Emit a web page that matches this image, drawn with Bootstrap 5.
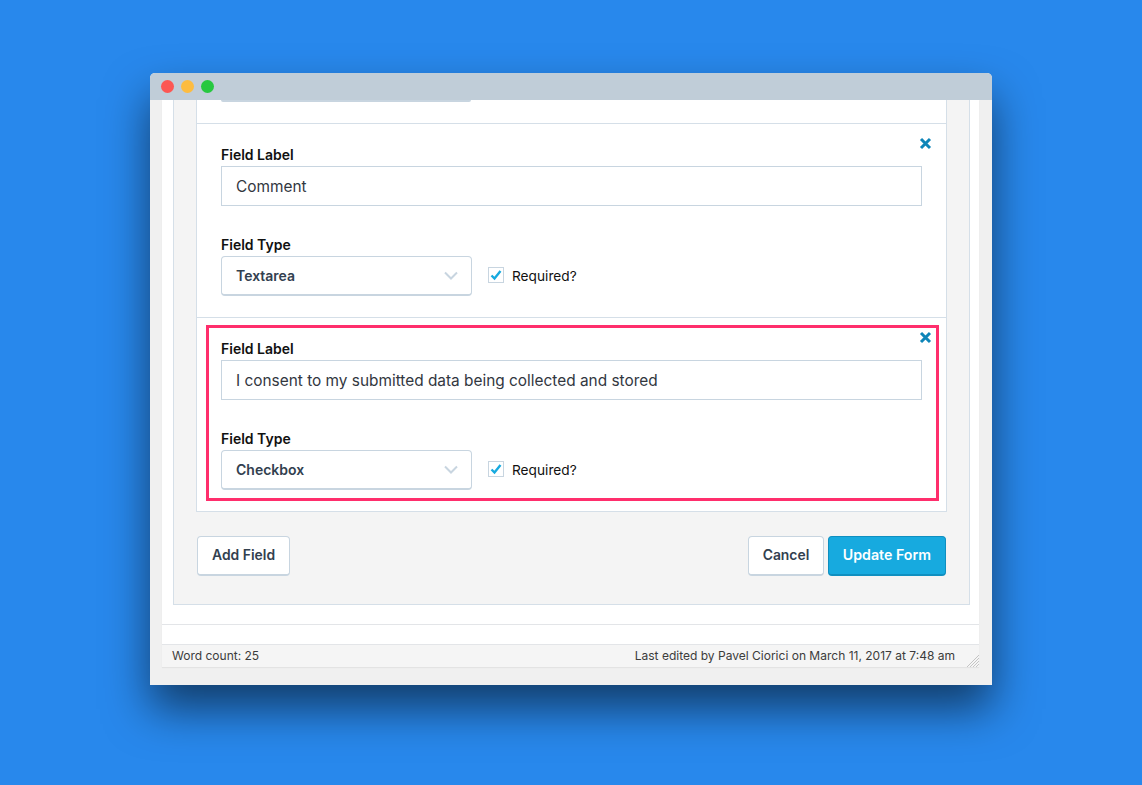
<!DOCTYPE html>
<html lang="en">
<head>
<meta charset="utf-8">
<title>Form fields</title>
<link href="https://cdn.jsdelivr.net/npm/bootstrap@5.3.0/dist/css/bootstrap.min.css" rel="stylesheet">
<style>
html,body{height:100%}
body{background:#2888ec;font-family:Inter,"Liberation Sans",sans-serif;margin:0;padding:73px 150px 100px;overflow:hidden}
.win{width:842px;height:612px;background:#f0f0f0;border-radius:5px 5px 0 0;box-shadow:0 24px 45px rgba(0,0,0,.55);overflow:hidden}
.tbar{height:27px;background:#c0cdd8;padding-left:11px;gap:7px}
.dot{width:13px;height:13px;border-radius:50%}
.d1{background:#fc5753}.d2{background:#fdbc40}.d3{background:#27c840}
.editor{margin:0 13px 0 12px;height:567px;background:#fff;box-shadow:0 1px 1px rgba(0,0,0,.05)}
.metabox{margin:0 9px 0 11px;height:505px;background:#f4f4f4;border:1px solid #d5dfe8;border-top:0;padding:0 22px 0 22px}
.fieldlist{width:751px;background:#fff;border:1px solid #d5dfe8;border-top:0}
.cutoff{height:2px;width:250px;margin-left:24px;background:#c8d5e0;border-radius:0 0 3px 3px}
.frow{position:relative;height:193px;padding:23px 24px 0}
.frow.first{height:195px;margin-top:21px;border-top:1px solid #d5dfe8;border-bottom:1px solid #d5dfe8}
.flabel{display:block;font-size:14px;line-height:16px;font-weight:600;color:#111;margin:0 0 3px}
.finput{height:40px;width:701px;border:1px solid #c8d5e0;padding:0 14px;font-size:15.4px;line-height:40px;color:#32373f;margin-bottom:31px;background:#fff}
.fselect{width:251px;height:40px;border:1px solid #c8d5e0;border-bottom-width:2px;border-radius:4px;padding:0 13px 0 14px;font-size:14px;font-weight:600;color:#32404f;background:#fff}
.fcheck{width:16px;height:16px;border:1px solid #c8d5e0;background:#fff}
.freq{font-size:13.7px;color:#111;margin-left:8px;position:relative;top:1px}
.chk{margin-left:16px;padding-bottom:1px}
.xbtn{position:absolute;right:14px;top:13px;width:13px;height:13px}
.hilite{position:absolute;left:9px;right:7px;top:7px;bottom:10px;border:3px solid #ff2e6c;pointer-events:none}
.actions{width:749px;margin:24px 0 0 1px}
.ubtn{height:40px;border:1px solid #c8d5e0;border-bottom-width:2px;border-radius:4px;background:#fff;color:#32404f;font-size:13.9px;font-weight:600;padding:0 14px 2px;line-height:34px}
.ubtn:hover{background:#fff;color:#32404f;border-color:#c8d5e0}
.ubtn.cxl{padding:0 13.5px 2px}
.ubtn.prime,.ubtn.prime:hover{background:#17aadf;border-color:#0f8fc0;color:#fff;font-size:14.2px}
.gap20{height:20px;border-bottom:1px solid #e3e5e8}
.status{height:23px;margin-top:19px;background:#f5f5f5;border-top:1px solid #e3e5e8;padding:0 24px 0 10px;font-size:12.03px;line-height:22px;color:#3c3c3c;position:relative}
.grip{position:absolute;right:0;bottom:0;width:12px;height:12px}
</style>
</head>
<body>
<div class="win">
  <div class="tbar d-flex align-items-center">
    <span class="dot d1"></span><span class="dot d2"></span><span class="dot d3"></span>
  </div>
  <div class="editor">
    <div class="metabox">
      <div class="fieldlist">
        <div class="cutoff"></div>
        <div class="frow first">
          <svg class="xbtn" viewBox="0 0 13 13"><path d="M2 2l9 9M11 2l-9 9" stroke="#0e85b8" stroke-width="3" fill="none"/></svg>
          <label class="flabel">Field Label</label>
          <div class="finput">Comment</div>
          <label class="flabel">Field Type</label>
          <div class="d-flex align-items-center">
            <div class="fselect d-flex align-items-center justify-content-between"><span>Textarea</span>
              <svg width="14" height="9" viewBox="0 0 14 9"><path d="M1 1.5l6 6 6-6" stroke="#c8d5e0" stroke-width="2" fill="none"/></svg></div>
            <div class="chk d-flex align-items-center">
              <span class="fcheck d-flex align-items-center justify-content-center"><svg width="12" height="11" viewBox="0 0 12 11"><path d="M1.5 5.5l3 3 6-7.5" stroke="#17aadf" stroke-width="2.4" fill="none"/></svg></span>
              <span class="freq">Required?</span>
            </div>
          </div>
        </div>
        <div class="frow last">
          <span class="hilite"></span>
          <svg class="xbtn" viewBox="0 0 13 13"><path d="M2 2l9 9M11 2l-9 9" stroke="#0e85b8" stroke-width="3" fill="none"/></svg>
          <label class="flabel">Field Label</label>
          <div class="finput">I consent to my submitted data being collected and stored</div>
          <label class="flabel">Field Type</label>
          <div class="d-flex align-items-center">
            <div class="fselect d-flex align-items-center justify-content-between"><span>Checkbox</span>
              <svg width="14" height="9" viewBox="0 0 14 9"><path d="M1 1.5l6 6 6-6" stroke="#c8d5e0" stroke-width="2" fill="none"/></svg></div>
            <div class="chk d-flex align-items-center">
              <span class="fcheck d-flex align-items-center justify-content-center"><svg width="12" height="11" viewBox="0 0 12 11"><path d="M1.5 5.5l3 3 6-7.5" stroke="#17aadf" stroke-width="2.4" fill="none"/></svg></span>
              <span class="freq">Required?</span>
            </div>
          </div>
        </div>
      </div>
      <div class="actions d-flex justify-content-between">
        <button class="btn ubtn" type="button">Add Field</button>
        <div class="d-flex gap-1">
          <button class="btn ubtn cxl" type="button">Cancel</button>
          <button class="btn ubtn prime" type="button">Update Form</button>
        </div>
      </div>
    </div>
    <div class="gap20"></div>
    <div class="status d-flex justify-content-between">
      <span>Word count: 25</span>
      <span>Last edited by Pavel Ciorici on March 11, 2017 at 7:48 am</span>
      <svg class="grip" viewBox="0 0 12 12"><path d="M12 0L0 12M12 3L3 12M12 6l-6 6M12 9l-3 3" stroke="#c4c4c4" stroke-width="1" fill="none"/></svg>
    </div>
  </div>
</div>
<script src="https://cdn.jsdelivr.net/npm/bootstrap@5.3.0/dist/js/bootstrap.bundle.min.js"></script>
</body>
</html>
